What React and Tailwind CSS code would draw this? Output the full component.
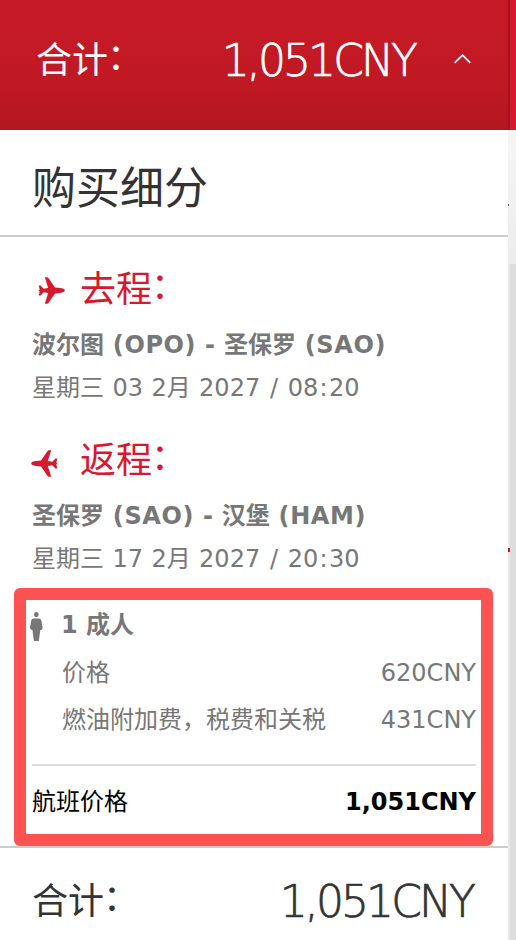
import React from "react";

const flights = [
  {
    title: "去程",
    from: "波尔图",
    fromCode: "(OPO)",
    to: "圣保罗",
    toCode: "(SAO)",
    date: "星期三 03 2月 2027",
    time: ["08", "20"],
  },
  {
    title: "返程",
    from: "圣保罗",
    fromCode: "(SAO)",
    to: "汉堡",
    toCode: "(HAM)",
    date: "星期三 17 2月 2027",
    time: ["20", "30"],
    inbound: true,
  },
];

const fares = [
  { label: "价格", amount: "620CNY" },
  { label: "燃油附加费，税费和关税", amount: "431CNY" },
];

const PlaneIcon = ({ className }) => (
  <svg viewBox="0 0 27 27" className={className} fill="currentColor">
    <path d="M26.8 13.5C26.8 12.2 24.8 11.4 22 11.1L17 10.6 10.6 1.2C10 .4 9.5.2 8.8.2H6.8L10.2 10.9 5.6 11.7 2.6 8.6H.7L1.7 12.4.7 13.5 1.7 14.6.7 18.4H2.6L5.6 15.3 10.2 16.1 6.8 26.8H8.8C9.5 26.8 10 26.6 10.6 25.8L17 16.4 22 15.9C24.8 15.6 26.8 14.8 26.8 13.5Z" />
  </svg>
);

const AdultIcon = ({ className }) => (
  <svg viewBox="0 0 13 29" className={className} fill="currentColor">
    <ellipse cx="6.3" cy="2.6" rx="2.3" ry="2.6" />
    <path d="M3.6 6.4H9C10.3 6.4 11 7.2 11.4 8.8L12.6 15.4C12.7 17 11.8 18 10.3 18L8.8 29H3.9L2.4 18C.9 18 -.1 17 0 15.4L1.2 8.8C1.6 7.2 2.3 6.4 3.6 6.4Z" />
  </svg>
);

const Colon = () => <span className="relative -top-[3px] -left-px">：</span>;

const Amount = ({ className }) => (
  <span
    className={`font-['DejaVu_Sans_Light','DejaVu_Sans',sans-serif] font-extralight text-[44px] leading-none mr-[3px] tracking-[-2.9px] [-webkit-text-stroke:0.7px_currentColor] ${className}`}
  >
    1,051CNY
  </span>
);

const Flight = ({ flight }) => (
  <section className="h-[171px] pl-8">
    <h2 className="flex h-[54px] items-center text-[36px] leading-none text-[#d7192d]">
      <PlaneIcon
        className={
          flight.inbound
            ? "mt-1.5 -ml-px mr-[22px] size-[27px] -scale-x-100"
            : "mt-0.5 ml-[6px] mr-[15px] size-[27px]"
        }
      />
      <span className="mt-0.5">
        {flight.title}
        <Colon />
      </span>
    </h2>
    <p className="mt-[10px] h-[43px] text-2xl leading-[38px] font-bold whitespace-nowrap [word-spacing:0.5px]">
      <span className="font-semibold">{flight.from}</span>{" "}
      <span className="tracking-[0.6px]">{flight.fromCode}</span> -{" "}
      <span className="font-semibold">{flight.to}</span>{" "}
      <span className="tracking-[0.6px]">{flight.toCode}</span>
    </p>
    <p className="text-2xl leading-[38px] whitespace-nowrap [word-spacing:0.8px]">
      {flight.date} <span className="px-[1.3px]">/</span> {flight.time[0]}
      <span className="px-[1.3px]">:</span>
      {flight.time[1]}
    </p>
  </section>
);

const App = () => {
  return (
    <div className="flex h-[940px] w-[516px] overflow-hidden bg-white font-['DejaVu_Sans','Noto_Sans_CJK_SC',sans-serif] text-[#777]">
      <main className="w-[508px] shrink-0">
        <header className="flex h-[130px] items-start bg-linear-to-b from-[#c51a26] from-20% via-[#c01923] via-65% to-[#b31720] pl-9 text-white">
          <span className="mt-[43px] text-[36px] leading-none">
            合计
            <Colon />
          </span>
          <Amount className="mt-[39px] ml-auto" />
          <svg
            viewBox="0 0 17 10"
            className="mt-[54px] mr-[37px] ml-9 h-2.5 w-[17px]"
            fill="none"
            stroke="currentColor"
            strokeWidth="1.8"
          >
            <path d="M.7 8.8 8.5 1.2 16.3 8.8" />
          </svg>
        </header>

        <h1 className="h-[107px] border-b-2 border-[#ccc] pt-[37px] pl-8 text-[44px] leading-none text-[#333]">
          购买细分
        </h1>

        <div className="h-[351px] pt-[25px]">
          {flights.map((flight) => (
            <Flight key={flight.title} flight={flight} />
          ))}
        </div>

        {/* Passenger fares */}
        <section className="ml-[14px] h-[258px] w-[479px] rounded-[6px] border-12 border-[#fc5252] pr-[5px]">
          <div className="flex h-[50px] items-center pl-[4px] text-2xl font-bold">
            <AdultIcon className="mt-[3px] mr-[18px] h-[29px] w-[13px]" />
            <span>
              1 <span className="font-semibold">成人</span>
            </span>
          </div>
          {fares.map((fare) => (
            <div
              key={fare.label}
              className="flex h-[47px] items-center justify-between pb-0.5 pl-9 text-2xl whitespace-nowrap"
            >
              <span>{fare.label}</span>
              <span>{fare.amount}</span>
            </div>
          ))}
          <div className="mt-5 ml-1.5 flex h-[72px] items-center justify-between border-t-2 border-[#ddd] pt-0.5 text-2xl text-black">
            <span>航班价格</span>
            <span className="font-bold">1,051CNY</span>
          </div>
        </section>

        <footer className="flex h-[94px] items-start justify-between border-t-2 border-[#ccc] pr-8 pl-8 text-[#333]">
          <span className="mt-[36px] text-[36px] leading-none">
            合计
            <Colon />
          </span>
          <Amount className="mt-[32px]" />
        </footer>
      </main>

      {/* Edge of the page behind the panel */}
      <aside className="w-2 shrink-0">
        <div className="h-[130px] border-l-2 border-[#a0151d] bg-[#d7192d]" />
        <div className="h-[134px] bg-linear-to-b from-[#f5f5f5] to-[#ececec] pt-[74px]">
          <div className="h-0.5 w-px bg-[#555]" />
        </div>
        <div className="h-[676px] border-l-2 border-[#e9e9e9] bg-[#ddd] pt-[284px]">
          <div className="-ml-0.5 h-1 w-0.5 bg-[#c51a26]" />
        </div>
      </aside>
    </div>
  );
};

export default App;
